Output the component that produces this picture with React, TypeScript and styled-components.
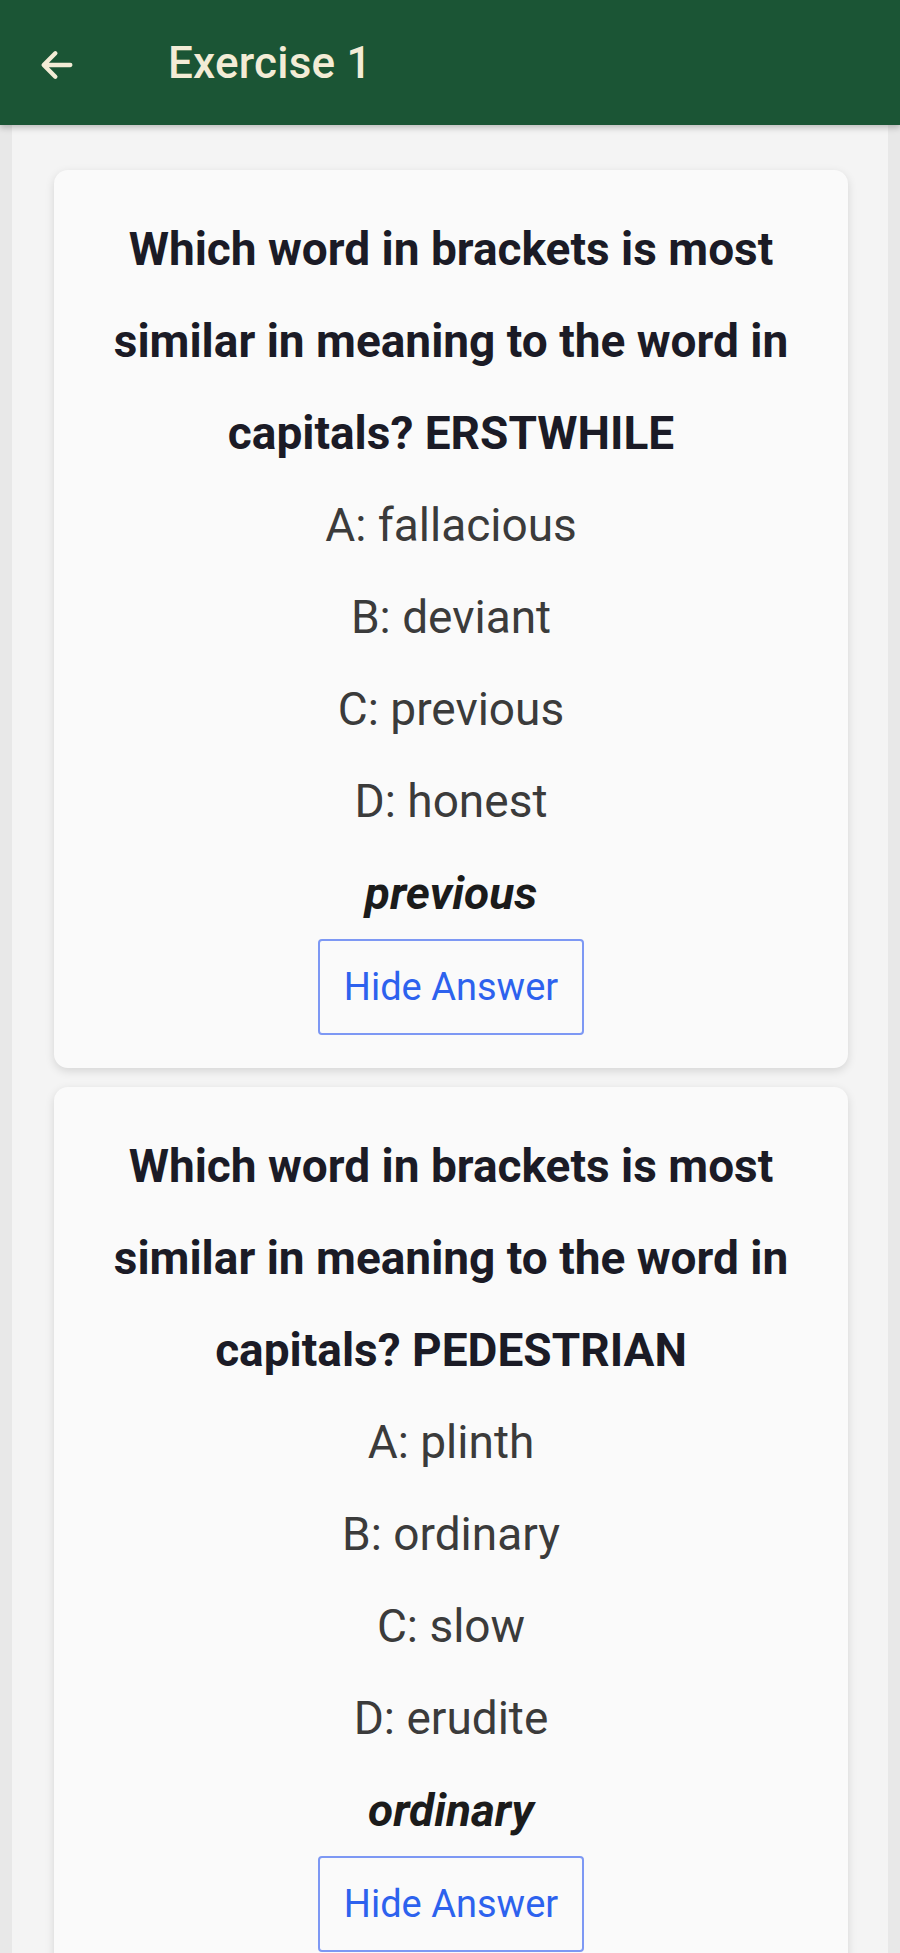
import React, { useState } from "react";
import styled, { createGlobalStyle } from "styled-components";

const GlobalStyle = createGlobalStyle`
  html, body {
    margin: 0;
    padding: 0;
    background: #e8e8e8;
    font-family: Roboto, "Noto Sans", sans-serif;
  }
  * {
    box-sizing: border-box;
  }
`;

const AppBar = styled.header`
  height: 125px;
  background: #1b5535;
  display: flex;
  align-items: center;
  padding-left: 36px;
  gap: 90px;
  position: relative;
  z-index: 1;
  box-shadow: 0 3px 6px rgba(0, 0, 0, 0.22);
`;

const BackButton = styled.button`
  background: transparent;
  border: 0;
  padding: 0;
  width: 42px;
  height: 42px;
  display: flex;
  align-items: center;
  justify-content: center;
  margin-top: 4px;
`;

const Title = styled.h1`
  margin: 0;
  font-size: 44px;
  font-weight: 500;
  color: #f3ecd6;
  letter-spacing: 0.2px;
`;

const Content = styled.main`
  margin: 0 12px;
  background: #f4f4f4;
  padding: 45px 40px 40px 42px;
  display: flex;
  flex-direction: column;
  gap: 19px;
  min-height: 1828px;
`;

const Card = styled.section`
  background: #fafafa;
  border-radius: 14px;
  box-shadow: 0 3px 10px rgba(0, 0, 0, 0.13);
  padding: 33px 30px;
  display: flex;
  flex-direction: column;
  align-items: center;
  text-align: center;
`;

const Question = styled.p`
  margin: 0;
  font-size: 46px;
  line-height: 92px;
  font-weight: 700;
  color: #1b1b26;
`;

const Option = styled.p`
  margin: 0;
  font-size: 46px;
  line-height: 92px;
  font-weight: 400;
  color: #3b3b3b;
`;

const Answer = styled.p`
  margin: 0;
  font-size: 46px;
  line-height: 92px;
  font-weight: 700;
  font-style: italic;
  color: #1b1b1b;
`;

const ToggleButton = styled.button`
  width: 266px;
  height: 96px;
  background: transparent;
  border: 2px solid #7d98f4;
  border-radius: 4px;
  color: #2d62ee;
  font-family: Roboto, "Noto Sans", sans-serif;
  font-size: 38px;
  font-weight: 400;
  padding: 0;
`;

interface QuestionData {
  word: string;
  options: string[];
  answer: string;
}

const questions: QuestionData[] = [
  {
    word: "ERSTWHILE",
    options: ["fallacious", "deviant", "previous", "honest"],
    answer: "previous",
  },
  {
    word: "PEDESTRIAN",
    options: ["plinth", "ordinary", "slow", "erudite"],
    answer: "ordinary",
  },
];

const letters = ["A", "B", "C", "D"];

const QuestionCard: React.FC<{ data: QuestionData }> = ({ data }) => {
  const [shown, setShown] = useState<boolean>(true);
  return (
    <Card>
      <Question>
        Which word in brackets is most similar in meaning to the word in
        capitals? {data.word}
      </Question>
      {data.options.map((opt, i) => (
        <Option key={opt}>
          {letters[i]}: {opt}
        </Option>
      ))}
      {shown && <Answer>{data.answer}</Answer>}
      <ToggleButton type="button" onClick={() => setShown(!shown)}>
        {shown ? "Hide Answer" : "Show Answer"}
      </ToggleButton>
    </Card>
  );
};

const App: React.FC = () => {
  return (
    <>
      <GlobalStyle />
      <AppBar>
        <BackButton type="button" aria-label="Back">
          <svg width="40" height="40" viewBox="0 0 24 24" fill="none">
            <path
              d="M20 12H4.5M11 5l-7 7 7 7"
              stroke="#f3ecd6"
              strokeWidth="2.6"
              strokeLinecap="round"
              strokeLinejoin="round"
            />
          </svg>
        </BackButton>
        <Title>Exercise 1</Title>
      </AppBar>
      <Content>
        {questions.map((q) => (
          <QuestionCard key={q.word} data={q} />
        ))}
      </Content>
    </>
  );
};

export default App;
